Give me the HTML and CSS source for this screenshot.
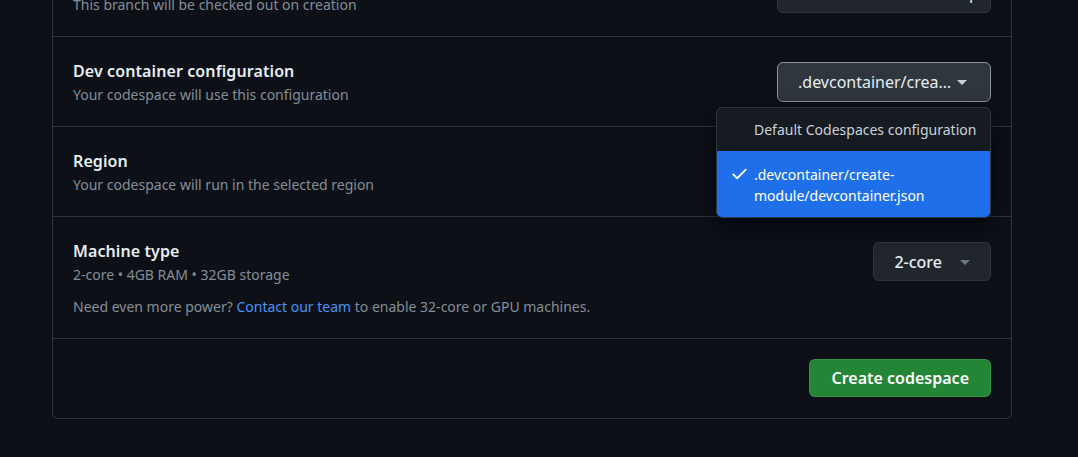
FILE: index.html
```html
<!DOCTYPE html>
<html lang="en">
<head>
<meta charset="utf-8">
<title>Create codespace</title>
<link rel="stylesheet" href="styles.css">
</head>
<body>
<div class="page">
  <div class="box">
    <div class="row">
      <div class="row-text">
        <div class="row-title">Branch</div>
        <div class="row-sub">This branch will be checked out on creation</div>
      </div>
      <button class="btn btn-wide">
        <svg class="branch-icon" viewBox="0 0 16 16" width="16" height="16"><path fill="currentColor" d="M9.5 3.25a2.25 2.25 0 1 1 3 2.122V6A2.5 2.5 0 0 1 10 8.5H6a1 1 0 0 0-1 1v1.128a2.251 2.251 0 1 1-1.5 0V5.372a2.25 2.25 0 1 1 1.5 0v1.836A2.493 2.493 0 0 1 6 7h4a1 1 0 0 0 1-1v-.628A2.25 2.25 0 0 1 9.5 3.25Zm-6 0a.75.75 0 1 0 1.5 0 .75.75 0 0 0-1.5 0Zm8.25-.75a.75.75 0 1 0 0 1.5.75.75 0 0 0 0-1.5ZM4.25 12a.75.75 0 1 0 0 1.5.75.75 0 0 0 0-1.5Z"/></svg>
        <span class="btn-label">create-module-setup</span>
        <span class="caret"></span>
      </button>
    </div>

    <div class="row">
      <div class="row-text">
        <div class="row-title">Dev container configuration</div>
        <div class="row-sub">Your codespace will use this configuration</div>
      </div>
      <div class="menu-anchor">
        <button class="btn btn-active">
          <span class="btn-label">.devcontainer/crea…</span>
          <span class="caret"></span>
        </button>
        <div class="menu">
          <div class="menu-item">
            <span class="menu-check"></span>
            <span class="menu-text">Default Codespaces configuration</span>
          </div>
          <div class="menu-item menu-item-selected">
            <svg class="menu-check" viewBox="0 0 16 16" width="19" height="19"><path fill="currentColor" d="M13.78 4.22a.75.75 0 0 1 0 1.060l-7.25 7.25a.75.75 0 0 1-1.06 0L2.22 9.28a.751.751 0 0 1 .018-1.042.751.751 0 0 1 1.042-.018L6 10.940l6.72-6.72a.75.75 0 0 1 1.06 0Z"/></svg>
            <span class="menu-text">.devcontainer/create-<br>module/devcontainer.json</span>
          </div>
        </div>
      </div>
    </div>

    <div class="row">
      <div class="row-text">
        <div class="row-title">Region</div>
        <div class="row-sub">Your codespace will run in the selected region</div>
      </div>
      <button class="btn">
        <span class="btn-label">US West</span>
        <span class="caret caret-muted"></span>
      </button>
    </div>

    <div class="row row-stack">
      <div class="row-head">
        <div class="row-text">
          <div class="row-title">Machine type</div>
          <div class="row-sub">2-core • 4GB RAM • 32GB storage</div>
        </div>
        <button class="btn btn-small">
          <span class="btn-label btn-label-gap">2-core</span>
          <span class="caret caret-muted"></span>
        </button>
      </div>
      <p class="row-note">Need even more power? <a href="#" class="link">Contact our team</a> to enable 32-core or GPU machines.</p>
    </div>

    <div class="footer">
      <button class="btn-primary">Create codespace</button>
    </div>
  </div>
</div>
</body>
</html>
```

FILE: styles.css
```css
* { box-sizing: border-box; }

html, body {
  margin: 0;
  padding: 0;
  background: #0d1117;
  overflow: hidden;
}

body {
  font-family: "Noto Sans", "Open Sans", Arial, sans-serif;
  color: #e6edf3;
}

.page {
  padding-left: 52px;
  margin-top: -54px;
}

.box {
  width: 960px;
  border: 1px solid #30363d;
  border-radius: 6px;
}

.row {
  display: flex;
  align-items: center;
  justify-content: space-between;
  padding: 23px 20px 21px;
  border-bottom: 1px solid #30363d;
}

.row-stack {
  display: block;
}

.row-head {
  display: flex;
  align-items: center;
  justify-content: space-between;
}

.row-title {
  font-size: 16px;
  line-height: 22px;
  font-weight: 600;
  color: #e6edf3;
  letter-spacing: 0.1px;
}

.row-sub {
  margin-top: 3px;
  font-size: 14px;
  line-height: 20px;
  color: #848d97;
}

.row-note {
  margin: 12px 0 0;
  font-size: 14px;
  line-height: 20px;
  color: #848d97;
}

.link {
  color: #4493f8;
  text-decoration: none;
}

.btn {
  display: inline-flex;
  align-items: center;
  height: 40px;
  padding: 0 20px;
  background: #21262d;
  border: 1px solid #30363d;
  border-radius: 6px;
  color: #e6edf3;
  font-family: inherit;
  font-size: 16px;
  line-height: 20px;
  gap: 6px;
  cursor: pointer;
}

.btn-wide {
  width: 214px;
  gap: 8px;
}

.btn-active {
  width: 214px;
  background: #30363d;
  border-color: #8b949e;
}

.btn-small {
  height: 39px;
  align-self: flex-start;
  margin-top: 2px;
  font-weight: 500;
}

.btn-label {
  white-space: nowrap;
}

.btn-label-gap {
  margin-right: 12px;
}

.branch-icon {
  color: #848d97;
  flex: none;
}

.caret {
  display: inline-block;
  width: 0;
  height: 0;
  border-style: solid;
  border-width: 5px 5px 0;
  border-color: #c9d1d9 transparent transparent;
  margin-top: 1px;
}

.caret-muted {
  border-top-color: #6e7681;
}

.menu-anchor {
  position: relative;
  align-self: flex-start;
  margin-top: 2px;
}

.menu {
  position: absolute;
  top: calc(100% + 5px);
  right: 0;
  width: 275px;
  z-index: 10;
  background: #161b22;
  border: 1px solid #30363d;
  border-radius: 6px;
  overflow: hidden;
  box-shadow: 0 8px 24px rgba(1, 4, 9, 0.75);
}

.menu-item {
  display: flex;
  align-items: flex-start;
  padding: 12px 12px 11px 13px;
  font-size: 14px;
  line-height: 20px;
  color: #c9d1d9;
  white-space: nowrap;
}

.menu-item-selected {
  background: #1f6feb;
  color: #ffffff;
  padding: 13px 12px 11px 13px;
  line-height: 21px;
}

.menu-check {
  flex: none;
  width: 19px;
  height: 19px;
  margin-right: 5px;
}

.menu-text {
  display: block;
}

.footer {
  display: flex;
  justify-content: flex-end;
  padding: 20px 20px 21px;
}

.btn-primary {
  height: 38px;
  padding: 0 21px;
  background: #238636;
  border: 1px solid rgba(240, 246, 252, 0.1);
  border-radius: 6px;
  color: #ffffff;
  font-family: inherit;
  font-size: 16px;
  font-weight: 600;
  cursor: pointer;
}
```
